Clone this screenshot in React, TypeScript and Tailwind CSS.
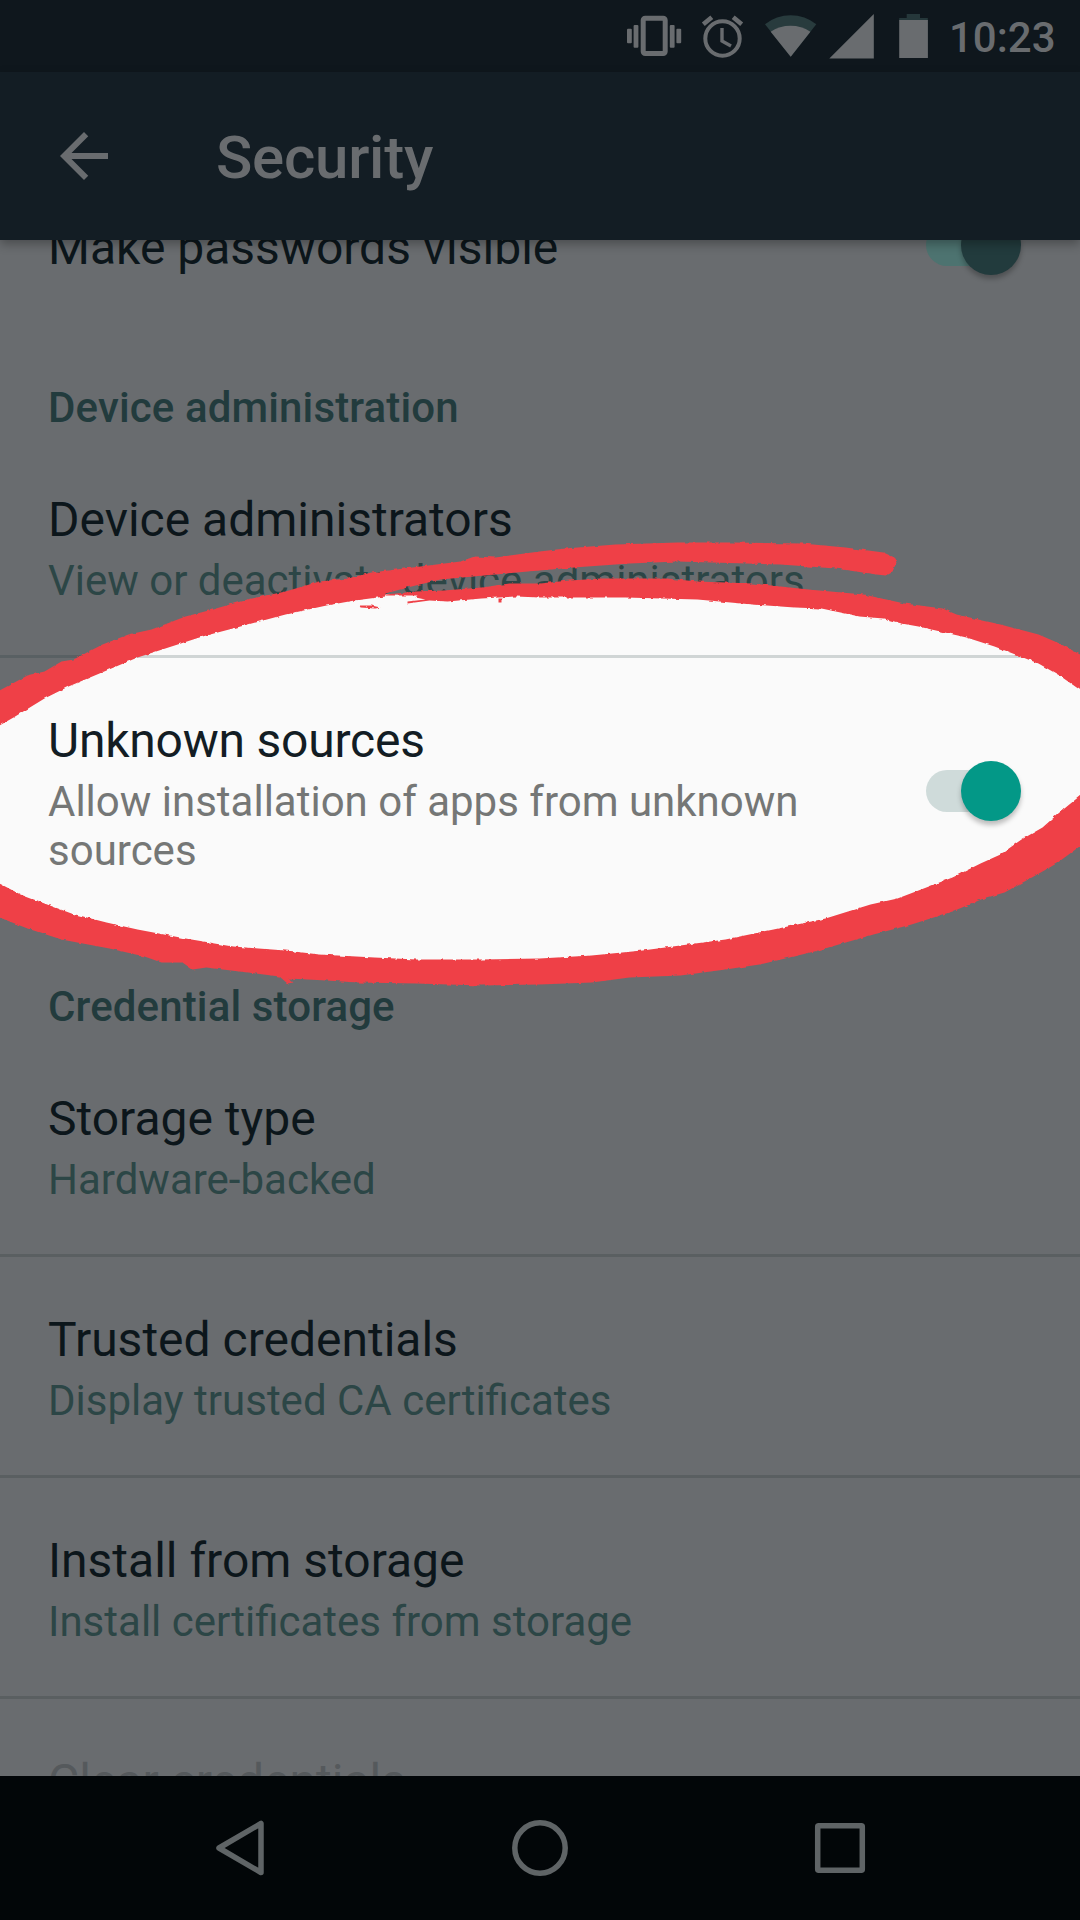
import type { ReactNode } from "react";

function StatusBar() {
  return (
    <div className="flex h-[72px] shrink-0 items-start bg-[#0f171d]">
      <svg className="h-[72px] w-[949px] shrink-0" viewBox="0 0 949 72" fill="#696c6f">
        <rect x="643.2" y="18.2" width="22" height="35.3" rx="2" fill="none" stroke="#696c6f" strokeWidth="5" />
        <rect x="627" y="28.7" width="4.8" height="14.6" rx="1" />
        <rect x="633.6" y="25" width="4.8" height="22.8" rx="1" />
        <rect x="669.8" y="25" width="4.8" height="22.8" rx="1" />
        <rect x="676.4" y="28.7" width="4.8" height="14.6" rx="1" />
        <g fill="none" stroke="#696c6f">
          <circle cx="722.5" cy="38.5" r="17.2" strokeWidth="4" />
          <path d="M703.3 24.2 L711.8 17.2 M741.7 24.2 L733.2 17.2" strokeWidth="4.6" />
          <path d="M722 28 V41 L731 46" strokeWidth="3.4" />
        </g>
        <path d="M790.7 56.7 L765 24.3 A41 41 0 0 1 816.3 24.3 Z" fill="#283b3d" />
        <path d="M790.7 56.7 L770.7 31.7 A36 36 0 0 1 810.4 31.7 Z" />
        <path d="M829.3 58.5 L873.8 14 V58.5 Z" />
        <path d="M899.2 20.5 V18 H906.7 V14 H920 V18 H927.8 V20.5 Z" fill="#25373a" />
        <rect x="899.2" y="20" width="28.7" height="38" />
      </svg>
      <span className="mt-[13px] whitespace-nowrap text-[42px] leading-[49px] font-medium text-[#696c6f]">10:23</span>
    </div>
  );
}

function AppBar() {
  return (
    <header className="z-10 flex h-[168px] shrink-0 items-center bg-[#131d24] pl-12 shadow-[0_4px_10px_rgba(0,0,0,0.3)]">
      <svg className="size-[72px]" viewBox="0 0 24 24" fill="#696c6f">
        <path d="M20 11H7.83l5.59-5.59L12 4l-8 8 8 8 1.41-1.41L7.83 13H20v-2z" />
      </svg>
      <h1 className="mt-1 ml-24 text-[60px] leading-[70px] font-medium tracking-[-0.25px] text-[#696c6f]">Security</h1>
    </header>
  );
}

function Toggle({ dim = false }: { dim?: boolean }) {
  return (
    <div className="relative mr-[59px] mb-[2px] h-[60px] w-[95px] shrink-0">
      <div className={"absolute top-[9px] left-0 h-[42px] w-[80px] rounded-full " + (dim ? "bg-[#4d7370]" : "bg-[#cfdbda]")} />
      <div
        className={
          "absolute top-0 right-0 size-[60px] rounded-full " +
          (dim
            ? "bg-[#223b3d] shadow-[0_4px_5px_rgba(0,0,0,0.25)]"
            : "bg-[#039887] shadow-[0_4px_5px_rgba(0,0,0,0.25)]")
        }
      />
    </div>
  );
}

type RowProps = {
  title: string;
  summary?: string;
  lit?: boolean;
  disabled?: boolean;
  divider?: boolean;
  children?: ReactNode;
};

function Row({ title, summary, lit, disabled, divider, children }: RowProps) {
  const titleColor = disabled ? "text-[#55595c]" : lit ? "tracking-[-0.22px] text-[#131d24]" : "text-[#0c161b]";
  return (
    <div>
      {divider && <div className={"h-[3px] " + (lit ? "bg-[#132e2d]/18" : "bg-[#5a5f61]")} />}
      <div className="flex items-center pl-12">
        <div className="flex-1 pt-[55px] pr-6 pb-[50px]">
          <div className={"text-[48px] leading-[56px] " + titleColor}>{title}</div>
          {summary && (
            <div className={"mt-2 text-[42px] leading-[49px] " + (lit ? "text-[#757776]" : "text-[#2c4646]")}>{summary}</div>
          )}
        </div>
        {children}
      </div>
    </div>
  );
}

function SectionHeader({ children }: { children: ReactNode }) {
  return (
    <h2 className="pt-[57px] pb-[5px] pl-12 text-[42px] leading-[49px] font-medium tracking-[0.13px] text-[#223b3d]">
      {children}
    </h2>
  );
}

const innerArea =
  "M0 715 L45 685 L138 647 L241 616 L327 595 L386 594 L448 596 L540 590 L626 589 L698 590 L795 598 L884 609 L967 628 L1039 652 L1080 675 V815 L1043 840 L1001 865 L953 889 L871 918 L774 942 L643 963 L540 971 L417 970 L286 962 L186 950 L107 934 L45 916 L0 895 Z";

const upperStroke =
  "M-6 693 L0 690 28 675 45 671 62 661 74 659 103 644 129 634 152 629 186 616 213 609 248 599 286 591 320 581 348 578 372 572 413 567 461 561 475 556 496 557 540 551 566 548 616 544 678 542 733 542 803 543 846 547 884 552 895 557 897 562 893 571 886 575 877 574 836 568 781 564 747 563 678 561 630 563 574 567 540 570 517 572 441 579 408 587 386 593 386 596 355 600 327 605 286 614 241 626 203 636 172 646 138 657 100 673 69 686 45 698 14 717 0 725 -6 729 Z";

const rightStroke =
  "M386 594 L416 591 444 590 482 587 510 583 540 583 570 580 602 578 667 578 698 581 753 583 809 589 864 594 905 603 943 608 957 614 1001 624 1039 634 1060 643 1086 657 V693 L1080 689 1060 675 1039 663 995 646 967 637 919 626 902 623 884 618 860 616 822 608 795 607 753 604 698 599 626 597 540 597 517 596 482 598 448 601 430 600 408 603 408 601 426 599 416 597 418 595 386 595 Z M360 605 L372 605 381 607 376 608 361 607 Z M499 598 l4 0 0 4 -4 0 Z";

const lowerStroke =
  "M-6 881 L0 883 21 894 45 903 72 913 107 922 138 929 186 938 234 946 286 950 320 954 375 957 417 959 482 959 540 958 592 955 643 950 726 939 774 929 826 918 871 904 898 898 953 877 981 863 1001 854 1022 839 1043 827 1060 812 1086 791 V841 L1080 846 1057 863 1036 875 1005 892 984 898 953 911 912 924 874 934 815 951 760 964 726 969 681 975 630 977 592 982 540 984 482 985 417 983 358 982 327 980 289 978 294 982 288 983 280 976 248 972 207 967 193 969 183 962 162 962 145 956 110 948 62 939 28 928 0 917 -6 915 Z";

function Spotlight() {
  return (
    <svg className="pointer-events-none absolute inset-0 size-full" viewBox="0 0 1080 1920">
      <path d={innerArea} fill="#fafafa" />
    </svg>
  );
}

function BrushMark() {
  return (
    <svg className="pointer-events-none absolute inset-0 size-full" viewBox="0 0 1080 1920">
      <filter id="rough" x="-2%" y="-2%" width="104%" height="104%">
        <feTurbulence type="fractalNoise" baseFrequency="0.17" numOctaves="2" seed="4" />
        <feDisplacementMap in="SourceGraphic" scale="3" xChannelSelector="R" yChannelSelector="G" />
      </filter>
      <g fill="#ef4047" filter="url(#rough)" transform="translate(-0.5 0.5)">
        <path d={upperStroke} />
        <path d={rightStroke} />
        <path d={lowerStroke} />
      </g>
    </svg>
  );
}

function NavBar() {
  return (
    <nav className="z-10 flex h-36 shrink-0 items-center bg-[#020608]">
      <svg className="h-36 w-full" viewBox="0 0 1080 144" fill="none" stroke="#5f6466" strokeWidth="5.5" strokeLinejoin="round">
        <path d="M219 72 L261 47.500 V96.500 Z" />
        <circle cx="540" cy="72" r="25.200" />
        <rect x="817.700" y="49.700" width="44.600" height="44.600" rx="1" />
      </svg>
    </nav>
  );
}

export default function App() {
  return (
    <div className="relative flex h-[1920px] w-[1080px] flex-col overflow-hidden bg-[#696c6f] font-[Roboto,sans-serif]">
      <Spotlight />
      <StatusBar />
      <AppBar />
      <main className="relative min-h-0 flex-1 overflow-hidden">
        <div className="-mt-[75px]">
          <Row title="Make passwords visible">
            <Toggle dim />
          </Row>
          <SectionHeader>Device administration</SectionHeader>
          <Row title="Device administrators" summary="View or deactivate device administrators" />
          <Row title="Unknown sources" summary="Allow installation of apps from unknown sources" lit divider>
            <Toggle />
          </Row>
          <SectionHeader>Credential storage</SectionHeader>
          <Row title="Storage type" summary="Hardware-backed" />
          <Row title="Trusted credentials" summary="Display trusted CA certificates" divider />
          <Row title="Install from storage" summary="Install certificates from storage" divider />
          <Row title="Clear credentials" disabled divider />
        </div>
      </main>
      <BrushMark />
      <NavBar />
    </div>
  );
}
